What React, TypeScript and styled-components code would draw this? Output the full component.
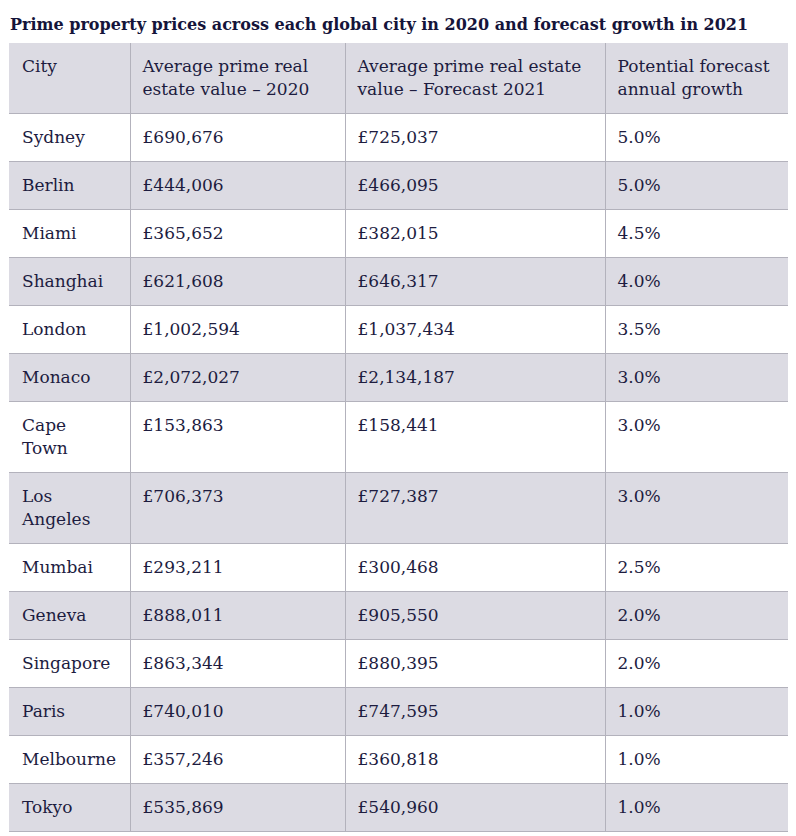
import React from "react";
import styled, { createGlobalStyle } from "styled-components";

const Global = createGlobalStyle`
  html, body { margin: 0; padding: 0; background: #ffffff; }
  body { font-family: "DejaVu Serif", "Liberation Serif", serif; color: #1d1c3f; }
`;

const Page = styled.div`
  padding: 13px 8px 0 9px;
  width: 779px;
`;

const Title = styled.h2`
  margin: 0 0 7px 1px;
  font-size: 16px;
  line-height: 23px;
  font-weight: bold;
  color: #15143a;
  letter-spacing: 0;
`;

const Table = styled.table`
  width: 779px;
  border-collapse: collapse;
  table-layout: fixed;
  font-size: 17px;
  line-height: 23px;
`;

const Col = styled.col<{ $w: number }>`
  width: ${(p) => p.$w}px;
`;

const Row = styled.tr<{ $shaded: boolean }>`
  background: ${(p) => (p.$shaded ? "#dcdbe3" : "#ffffff")};
`;

const cellBase = `
  text-align: left;
  font-weight: normal;
  vertical-align: top;
  padding: 12px 8px 12px 12px;
  border-left: 1px solid #b3b2bc;
  border-bottom: 1px solid #b3b2bc;
  &:first-child { border-left: none; padding-left: 13px; padding-right: 14px; }
`;

const Head = styled.th`
  ${cellBase}
`;

const Cell = styled.td`
  ${cellBase}
`;

const cols = [
  { label: "City", w: 121 },
  { label: "Average prime real estate value – 2020", w: 215 },
  { label: "Average prime real estate value – Forecast 2021", w: 260 },
  { label: "Potential forecast annual growth", w: 183 },
];

const rows: [string, string, string, string][] = [
  ["Sydney", "£690,676", "£725,037", "5.0%"],
  ["Berlin", "£444,006", "£466,095", "5.0%"],
  ["Miami", "£365,652", "£382,015", "4.5%"],
  ["Shanghai", "£621,608", "£646,317", "4.0%"],
  ["London", "£1,002,594", "£1,037,434", "3.5%"],
  ["Monaco", "£2,072,027", "£2,134,187", "3.0%"],
  ["Cape Town", "£153,863", "£158,441", "3.0%"],
  ["Los Angeles", "£706,373", "£727,387", "3.0%"],
  ["Mumbai", "£293,211", "£300,468", "2.5%"],
  ["Geneva", "£888,011", "£905,550", "2.0%"],
  ["Singapore", "£863,344", "£880,395", "2.0%"],
  ["Paris", "£740,010", "£747,595", "1.0%"],
  ["Melbourne", "£357,246", "£360,818", "1.0%"],
  ["Tokyo", "£535,869", "£540,960", "1.0%"],
];

export default function App() {
  return (
    <Page>
      <Global />
      <Title>Prime property prices across each global city in 2020 and forecast growth in 2021</Title>
      <Table>
        <colgroup>
          {cols.map((c) => (
            <Col key={c.label} $w={c.w} />
          ))}
        </colgroup>
        <thead>
          <Row $shaded>
            {cols.map((c) => (
              <Head key={c.label}>{c.label}</Head>
            ))}
          </Row>
        </thead>
        <tbody>
          {rows.map((r, i) => (
            <Row key={r[0]} $shaded={i % 2 === 1}>
              {r.map((v, j) => (
                <Cell key={j}>{v}</Cell>
              ))}
            </Row>
          ))}
        </tbody>
      </Table>
    </Page>
  );
}
